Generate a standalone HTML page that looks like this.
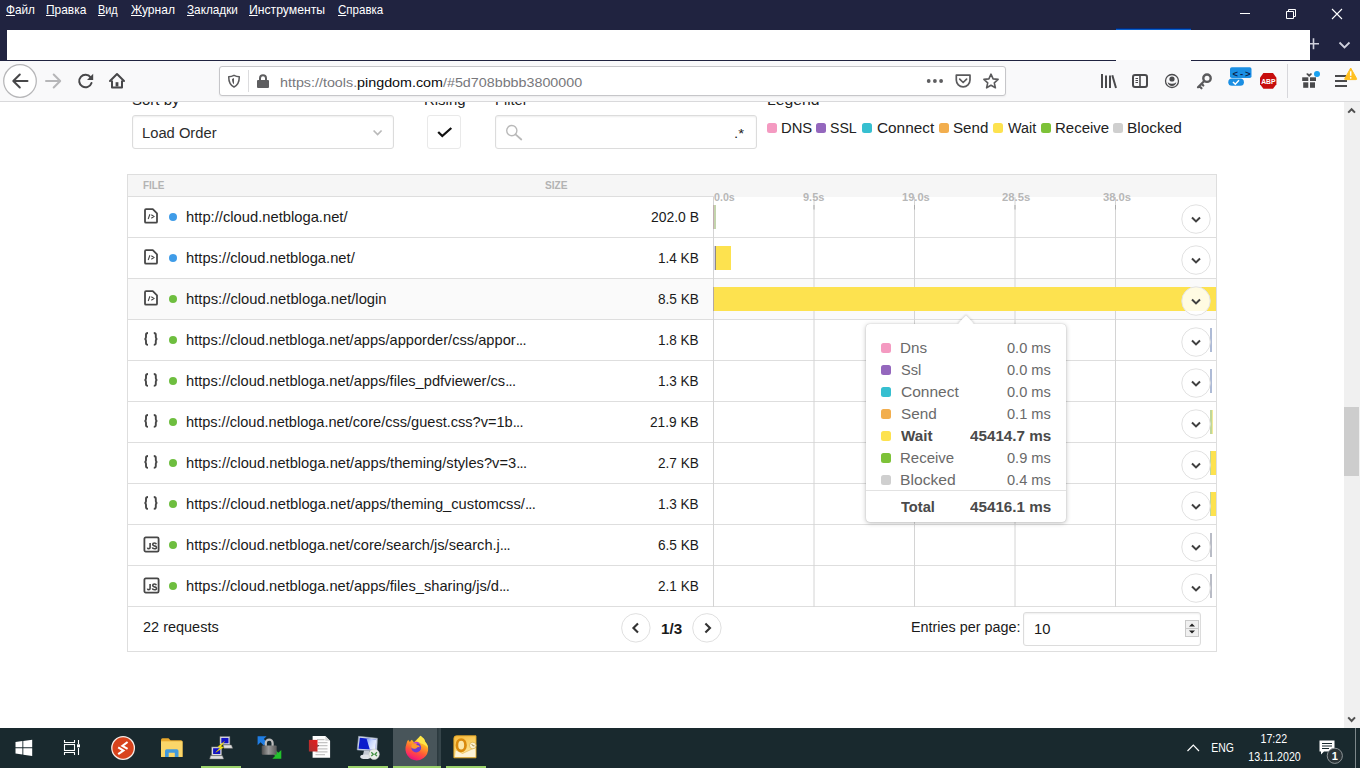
<!DOCTYPE html>
<html lang="ru">
<head>
<meta charset="utf-8">
<title>Pingdom Tools</title>
<style>
*{box-sizing:border-box;margin:0;padding:0}
html,body{width:1360px;height:768px;overflow:hidden;background:#fff}
body{position:relative;font-family:"Liberation Sans",sans-serif;color:#222;-webkit-font-smoothing:antialiased}
.abs{position:absolute}
/* ---------- browser chrome ---------- */
#titlebar{left:0;top:0;width:1360px;height:61px;background:#202340}
#tabwhite{left:7px;top:30px;width:1303px;height:30px;background:#fff}
#activetab{left:1116px;top:28px;width:75px;height:33px;background:linear-gradient(#062a78 0,#062a78 1px,#0a5fcb 1px,#0a5fcb 2px,#fff 2px,#fff 32px,#f9f9fa 32px)}
#toolbar{left:0;top:61px;width:1360px;height:41px;background:#f9f9fa;border-bottom:1px solid #d9d9db}
#urlbar{left:219px;top:66px;width:787px;height:30px;background:#fff;border:1px solid #c6c6c9;border-radius:3px;box-shadow:0 1px 2px rgba(0,0,0,.06)}
/* ---------- page ---------- */
#page{left:0;top:102px;width:1344px;height:626px;background:#fff;overflow:hidden}
#scrollbar{left:1344px;top:102px;width:16px;height:626px;background:#f0f0f0}
#thumb{left:1344px;top:407px;width:15px;height:69px;background:#cdcdcd}
.box{background:#fff;border:1px solid #dcdcdc;border-radius:3px}

/* ---------- table ---------- */
#tbl{left:127px;top:72px;width:1090px;height:478px;border:1px solid #dedede;background:#fff}
#thead{left:128px;top:73px;width:1088px;height:22px;background:#f6f6f6}
#theadb{left:128px;top:94px;width:586px;height:1px;background:#dedede}
.row{left:128px;width:1088px;height:41px;border-bottom:1px solid #dedede}
.row.hov{background:#fafafa}
.dot{left:41px;top:16px;width:8px;height:8px;border-radius:50%}
.bar{height:24px}
.exp{width:29px;height:29px;border-radius:50%;border:1px solid #dedede;background:rgba(255,255,255,.82);left:1181px}

/* ---------- tooltip ---------- */
#tip{left:866px;top:222px;width:200px;height:198px;background:#fff;border-radius:4px;box-shadow:0 1px 5px rgba(0,0,0,.26),0 0 1px rgba(0,0,0,.25)}
#tiparrow{left:960px;top:216px;width:12px;height:12px;background:#fff;transform:rotate(45deg);box-shadow:-1px -1px 2px rgba(0,0,0,.13)}
/* ---------- footer ---------- */
/* ---------- legend ---------- */
.t{position:absolute;white-space:nowrap;line-height:1;transform-origin:0 0}
.t u{text-decoration:underline;text-underline-offset:1px;text-decoration-thickness:1px}
.t b{font-weight:normal;color:#0c0c0d}
.t i{font-style:normal;letter-spacing:-.7px}
.inset{box-shadow:inset 0 1px 2px rgba(0,0,0,.07)}
.pg{width:29px;height:29px;border-radius:50%;border:1px solid #dedede;background:#fff}
.lq{top:21px;width:10px;height:10px;border-radius:2.500px}
.tq{left:881px;width:10px;height:10px;border-radius:2.500px}
/* ---------- taskbar ---------- */
#taskbar{left:0;top:728px;width:1360px;height:40px;background:#19292e}
</style>
</head>
<body>
<div id="titlebar" class="abs"></div>
<div id="tabwhite" class="abs"></div>
<div id="activetab" class="abs"></div>
<div id="toolbar" class="abs"></div>
<div id="urlbar" class="abs"></div>
<!--CHROME-->
<svg class="abs" style="left:0;top:0" width="1360" height="102" viewBox="0 0 1360 102">
<!-- window controls -->
<g stroke="#fff" stroke-width="1" fill="none">
<path d="M1240 13.500 H1250"/>
<path d="M1286.500 11.500 H1293.500 V18.500 H1286.500 Z"/>
<path d="M1288.500 11.500 V9.500 H1295.500 V16.500 H1293.500"/>
<path d="M1332 9 L1342 19 M1342 9 L1332 19" stroke-width="1.1"/>
</g>
<!-- new tab + / list tabs -->
<g stroke="#cfd0dc" stroke-width="1.6" fill="none">
<path d="M1310 43.800 H1319 M1313.500 38.300 V49.300"/>
<path d="M1339.500 42.500 L1344.500 47.500 L1349.500 42.500" stroke-width="1.8"/>
</g>
<!-- back -->
<circle cx="20" cy="81" r="16.300" fill="#fff" stroke="#b6b6b8" stroke-width="1.250"/>
<path d="M27.500 81 H13.500 M19.800 74.500 L13.300 81 L19.800 87.500" fill="none" stroke="#474749" stroke-width="2" stroke-linecap="round" stroke-linejoin="round"/>
<!-- forward -->
<path d="M46 81 H60 M53.700 74.500 L60.200 81 L53.700 87.500" fill="none" stroke="#b6b6b8" stroke-width="2" stroke-linecap="round" stroke-linejoin="round"/>
<!-- reload -->
<path d="M90.600 77.300 A6.300 6.300 0 1 0 91.500 83" fill="none" stroke="#474749" stroke-width="2" stroke-linecap="round"/>
<path d="M93.200 73.800 V80 H87 Z" fill="#474749"/>
<!-- home -->
<path d="M110 81 L117 74 L124 81" fill="none" stroke="#474749" stroke-width="2" stroke-linecap="round" stroke-linejoin="round"/>
<path d="M112 80.500 V87.500 H122 V80.500" fill="none" stroke="#474749" stroke-width="2" stroke-linejoin="round"/>
<rect x="115.600" y="82.200" width="2.800" height="4.300" fill="#474749"/>
<!-- shield -->
<path d="M234 75.300 C236 76.400 238 76.700 239.300 76.700 C239.300 82 237.500 85.300 234 87 C230.500 85.300 228.700 82 228.700 76.700 C230 76.700 232 76.400 234 75.300 Z" fill="none" stroke="#5a5a5c" stroke-width="1.500" stroke-linejoin="round"/>
<path d="M234 78 V84.300 C232.700 83.300 232 81.500 232 79 Z" fill="#5a5a5c"/>
<path d="M248.500 70 V92" stroke="#dcdcde" stroke-width="1"/>
<!-- lock -->
<path d="M260 81 V78.200 A3 3 0 0 1 266 78.200 V81" fill="none" stroke="#5e5e60" stroke-width="2"/>
<rect x="257" y="80" width="12" height="8" rx="1" fill="#5e5e60"/>
<!-- page actions -->
<g fill="#5e5e60"><circle cx="928.700" cy="81" r="1.900"/><circle cx="934.900" cy="81" r="1.900"/><circle cx="941.100" cy="81" r="1.900"/></g>
<path d="M956.300 75.200 H970 V80 A6.850 6.850 0 0 1 956.300 80 Z" fill="none" stroke="#5a5a5c" stroke-width="1.700" stroke-linejoin="round"/>
<path d="M959.700 79.200 L963.150 82.500 L966.600 79.200" fill="none" stroke="#5a5a5c" stroke-width="1.700" stroke-linecap="round" stroke-linejoin="round"/>
<path d="M991 74.200 L993.100 78.900 L998.100 79.400 L994.300 82.800 L995.400 87.800 L991 85.200 L986.600 87.800 L987.700 82.800 L983.900 79.400 L988.900 78.900 Z" fill="none" stroke="#5a5a5c" stroke-width="1.600" stroke-linejoin="round"/>
<!-- library -->
<g stroke="#4a4a4c" stroke-width="2" fill="none" stroke-linecap="butt">
<path d="M1102 74 V88 M1106 75.500 V88 M1110 75.500 V88 M1112.300 75.200 L1116 88"/>
</g>
<!-- sidebar -->
<rect x="1133" y="75" width="14" height="12" rx="2" fill="none" stroke="#4a4a4c" stroke-width="2"/>
<path d="M1140 75 V87" stroke="#4a4a4c" stroke-width="1.600"/>
<path d="M1135.500 78.500 H1138 M1135.500 80.500 H1138 M1135.500 82.500 H1138" stroke="#4a4a4c" stroke-width="1"/>
<!-- account -->
<circle cx="1172" cy="81" r="6.500" fill="none" stroke="#4a4a4c" stroke-width="1.300"/>
<circle cx="1172" cy="79" r="2.600" fill="#4a4a4c"/>
<path d="M1167.600 82.300 Q1172 85.300 1176.400 82.300 Q1175.500 86 1172 86 Q1168.500 86 1167.600 82.300 Z" fill="#4a4a4c"/>
<!-- key -->
<circle cx="1207" cy="78.200" r="3.700" fill="none" stroke="#5a5a5c" stroke-width="2.400"/>
<path d="M1204.300 81 L1198 87.300 M1199.200 86 L1201.500 88.300 M1201.600 83.800 L1203.300 85.500" fill="none" stroke="#5a5a5c" stroke-width="2.200" stroke-linecap="round"/>
<!-- extension: blue -->
<rect x="1230" y="67.300" width="21.500" height="10.700" rx="1.800" fill="#1b8fe3"/>
<rect x="1228.300" y="78.600" width="15.600" height="7.200" rx="3.600" fill="#1b8fe3"/>
<path d="M1233 82 L1235.300 84.200 L1239 80.300" fill="none" stroke="#fff" stroke-width="1.500"/>
<text x="1232.600" y="76.700" font-family="Liberation Sans, sans-serif" font-size="9.500" font-weight="bold" fill="#0c1f4a" textLength="18" lengthAdjust="spacing">&lt;-&gt;</text>
<!-- ABP -->
<path d="M1263.400 73 H1273 L1276.400 77.700 V84.200 L1273 88.800 H1263.400 L1260 84.200 V77.700 Z" fill="#c70d0d"/>
<text x="1261.200" y="83.900" font-family="Liberation Sans, sans-serif" font-size="7.800" font-weight="bold" fill="#fff" textLength="14.300" lengthAdjust="spacingAndGlyphs">ABP</text>
<path d="M1287.500 64 V98" stroke="#d7d7db" stroke-width="1"/>
<!-- gift -->
<g fill="#4a4a4c">
<rect x="1302.200" y="77.300" width="6.100" height="3.700"/><rect x="1310" y="77.300" width="6" height="3.700"/>
<rect x="1303.200" y="82.300" width="5.100" height="5.500"/><rect x="1310" y="82.300" width="5" height="5.500"/>
<path d="M1309.150 76.900 L1306.200 73.900 Q1307.600 72.600 1309.150 74.500 Q1310.700 72.600 1312.100 73.900 Z"/>
</g>
<circle cx="1317" cy="74" r="3" fill="#19a1f0"/>
<!-- menu -->
<path d="M1335 76 H1347 M1335 81 H1347 M1335 86 H1347" stroke="#4a4a4c" stroke-width="2"/>
<path d="M1350.700 68 L1356.600 78.600 Q1357 79.600 1356 79.600 H1345.400 Q1344.400 79.600 1344.800 78.600 Z" fill="#ffbf1f" stroke="#ffbf1f" stroke-width="1" stroke-linejoin="round"/>
<path d="M1350.700 71.300 V75.800" stroke="#fff" stroke-width="1.500"/><circle cx="1350.700" cy="77.800" r="0.850" fill="#fff"/>
</svg>
<!--/CHROME-->
<span class="t" style="left:6.20px;top:4.10px;font-size:12.4px;color:#fff;transform:scaleX(0.9493)"><u>Ф</u>айл</span>
<span class="t" style="left:46.44px;top:4.10px;font-size:12.4px;color:#fff;transform:scaleX(0.9618)"><u>П</u>равка</span>
<span class="t" style="left:98.42px;top:4.10px;font-size:12.4px;color:#fff;transform:scaleX(0.8789)"><u>В</u>ид</span>
<span class="t" style="left:131.30px;top:4.10px;font-size:12.4px;color:#fff;transform:scaleX(0.9715)"><u>Ж</u>урнал</span>
<span class="t" style="left:186.80px;top:4.10px;font-size:12.4px;color:#fff;transform:scaleX(0.9496)"><u>З</u>акладки</span>
<span class="t" style="left:249.42px;top:4.10px;font-size:12.4px;color:#fff;transform:scaleX(0.9849)"><u>И</u>нструменты</span>
<span class="t" style="left:338.30px;top:4.10px;font-size:12.4px;color:#fff;transform:scaleX(0.9299)"><u>С</u>правка</span>
<span class="t" style="left:279.70px;top:76.10px;font-size:13.2px;color:#77777b;transform:scaleX(1.0845)">https://tools.<b>pingdom.com</b>/#5d708bbbb3800000</span>

<div id="page" class="abs">
<!-- controls (page coords = viewport y - 102) -->
<div class="abs box inset" style="left:132px;top:13px;width:262px;height:34px"></div>
<svg class="abs" style="left:371px;top:26px" width="14" height="10" viewBox="0 0 14 10"><path d="M2.600 2.500 L6.600 6.500 L10.600 2.500" fill="none" stroke="#b9b9b9" stroke-width="1.700"/></svg>
<div class="abs box" style="left:427px;top:13px;width:34px;height:34px;border-color:#e9e9e9"></div>
<svg class="abs" style="left:435px;top:23px" width="20" height="14" viewBox="0 0 20 14"><path d="M3.200 7 L7.300 11 L16.300 3" fill="none" stroke="#111" stroke-width="2.300"/></svg>
<div class="abs box inset" style="left:495px;top:13px;width:262px;height:34px"></div>
<svg class="abs" style="left:503px;top:20px" width="22" height="22" viewBox="0 0 22 22"><circle cx="8.800" cy="8.600" r="5.100" fill="none" stroke="#b9b9b9" stroke-width="1.400"/><path d="M12.500 12.300 L18.300 17.500" stroke="#b9b9b9" stroke-width="1.800" stroke-linecap="round"/></svg>
<!-- legend squares -->
<div class="abs lq" style="left:767px;background:#f49ac1"></div>
<div class="abs lq" style="left:816px;background:#9467bd"></div>
<div class="abs lq" style="left:862px;background:#36bfd0"></div>
<div class="abs lq" style="left:939px;background:#f2ae4e"></div>
<div class="abs lq" style="left:993px;background:#fde24f"></div>
<div class="abs lq" style="left:1041px;background:#7dc238"></div>
<div class="abs lq" style="left:1113px;background:#cfcfcf"></div>
<!-- table frame -->
<div id="tbl" class="abs"></div>
<div id="thead" class="abs"></div>
<div id="theadb" class="abs"></div>
<!-- footer -->
<svg class="abs" style="left:620px;top:510px" width="104" height="32" viewBox="0 0 104 32"><circle cx="15.850" cy="15.850" r="14.250" fill="#fff" stroke="#e0e0e0" stroke-width="1"/><circle cx="86.900" cy="15.850" r="14.250" fill="#fff" stroke="#e0e0e0" stroke-width="1"/><path d="M18 11.400 L13.400 16 L18 20.600 M85.400 11.400 L90 16 L85.400 20.600" fill="none" stroke="#333" stroke-width="2.100"/></svg>
<div class="abs box inset" style="left:1023px;top:510px;width:178px;height:34px"></div>
<div class="abs" style="left:1185px;top:518px;width:14px;height:17px;background:#f0f0f0;border:1px solid #c9c9c9"></div>
<div class="abs" style="left:1185px;top:526px;width:14px;height:1px;background:#c9c9c9"></div>
<svg class="abs" style="left:1188px;top:520px" width="8" height="13" viewBox="0 0 8 13"><path d="M1 4.500 L4 1.500 L7 4.500 Z M1 8.500 L4 11.500 L7 8.500 Z" fill="#222"/></svg>

<div class="abs row" style="top:95px"><svg class="abs" style="left:15px;top:10px" width="17" height="18" viewBox="0 0 17 18"><path d="M3 2.200 H9.800 L14 6.400 V14.700 Q14 15.700 13 15.700 H3 Q2 15.700 2 14.700 V3.200 Q2 2.200 3 2.200 Z" fill="#fff" stroke="#474747" stroke-width="1.800" stroke-linejoin="round"/><path d="M5.200 12 L6.900 7.200 M8.300 7.700 L11 9.500 L8.300 11.300" fill="none" stroke="#474747" stroke-width="1.100"/></svg><span class="abs dot" style="background:#3f9ce8"></span></div>
<div class="abs row" style="top:136px"><svg class="abs" style="left:15px;top:10px" width="17" height="18" viewBox="0 0 17 18"><path d="M3 2.200 H9.800 L14 6.400 V14.700 Q14 15.700 13 15.700 H3 Q2 15.700 2 14.700 V3.200 Q2 2.200 3 2.200 Z" fill="#fff" stroke="#474747" stroke-width="1.800" stroke-linejoin="round"/><path d="M5.200 12 L6.900 7.200 M8.300 7.700 L11 9.500 L8.300 11.300" fill="none" stroke="#474747" stroke-width="1.100"/></svg><span class="abs dot" style="background:#3f9ce8"></span></div>
<div class="abs row hov" style="top:177px"><svg class="abs" style="left:15px;top:10px" width="17" height="18" viewBox="0 0 17 18"><path d="M3 2.200 H9.800 L14 6.400 V14.700 Q14 15.700 13 15.700 H3 Q2 15.700 2 14.700 V3.200 Q2 2.200 3 2.200 Z" fill="#fff" stroke="#474747" stroke-width="1.800" stroke-linejoin="round"/><path d="M5.200 12 L6.900 7.200 M8.300 7.700 L11 9.500 L8.300 11.300" fill="none" stroke="#474747" stroke-width="1.100"/></svg><span class="abs dot" style="background:#6ebe3f"></span></div>
<div class="abs row" style="top:218px"><svg class="abs" style="left:14px;top:10px" width="20" height="19" viewBox="0 0 20 19"><path d="M6 3 Q4 3 4 4.800 V7.200 Q4 8.700 2.600 8.950 Q4 9.200 4 10.700 V13.100 Q4 14.900 6 14.900 M11.800 3 Q13.800 3 13.800 4.800 V7.200 Q13.800 8.700 15.200 8.950 Q13.800 9.200 13.800 10.700 V13.100 Q13.800 14.900 11.800 14.900" fill="none" stroke="#474747" stroke-width="1.900"/></svg><span class="abs dot" style="background:#6ebe3f"></span></div>
<div class="abs row" style="top:259px"><svg class="abs" style="left:14px;top:10px" width="20" height="19" viewBox="0 0 20 19"><path d="M6 3 Q4 3 4 4.800 V7.200 Q4 8.700 2.600 8.950 Q4 9.200 4 10.700 V13.100 Q4 14.900 6 14.900 M11.800 3 Q13.800 3 13.800 4.800 V7.200 Q13.800 8.700 15.200 8.950 Q13.800 9.200 13.800 10.700 V13.100 Q13.800 14.900 11.800 14.900" fill="none" stroke="#474747" stroke-width="1.900"/></svg><span class="abs dot" style="background:#6ebe3f"></span></div>
<div class="abs row" style="top:300px"><svg class="abs" style="left:14px;top:10px" width="20" height="19" viewBox="0 0 20 19"><path d="M6 3 Q4 3 4 4.800 V7.200 Q4 8.700 2.600 8.950 Q4 9.200 4 10.700 V13.100 Q4 14.900 6 14.900 M11.800 3 Q13.800 3 13.800 4.800 V7.200 Q13.800 8.700 15.200 8.950 Q13.800 9.200 13.800 10.700 V13.100 Q13.800 14.900 11.800 14.900" fill="none" stroke="#474747" stroke-width="1.900"/></svg><span class="abs dot" style="background:#6ebe3f"></span></div>
<div class="abs row" style="top:341px"><svg class="abs" style="left:14px;top:10px" width="20" height="19" viewBox="0 0 20 19"><path d="M6 3 Q4 3 4 4.800 V7.200 Q4 8.700 2.600 8.950 Q4 9.200 4 10.700 V13.100 Q4 14.900 6 14.900 M11.800 3 Q13.800 3 13.800 4.800 V7.200 Q13.800 8.700 15.200 8.950 Q13.800 9.200 13.800 10.700 V13.100 Q13.800 14.900 11.800 14.900" fill="none" stroke="#474747" stroke-width="1.900"/></svg><span class="abs dot" style="background:#6ebe3f"></span></div>
<div class="abs row" style="top:382px"><svg class="abs" style="left:14px;top:10px" width="20" height="19" viewBox="0 0 20 19"><path d="M6 3 Q4 3 4 4.800 V7.200 Q4 8.700 2.600 8.950 Q4 9.200 4 10.700 V13.100 Q4 14.900 6 14.900 M11.800 3 Q13.800 3 13.800 4.800 V7.200 Q13.800 8.700 15.200 8.950 Q13.800 9.200 13.800 10.700 V13.100 Q13.800 14.900 11.800 14.900" fill="none" stroke="#474747" stroke-width="1.900"/></svg><span class="abs dot" style="background:#6ebe3f"></span></div>
<div class="abs row" style="top:423px"><svg class="abs" style="left:14.600px;top:10.900px" width="17" height="17" viewBox="0 0 17 17"><rect x="1.400" y="1.400" width="14.200" height="14.200" rx="1.300" fill="#fff" stroke="#474747" stroke-width="1.800"/><path d="M7.100 7 V11.300 Q7.100 12.800 5.800 12.800 Q4.700 12.800 4.500 11.600 M13.300 8.300 Q13 7 11.400 7 Q9.700 7 9.700 8.500 Q9.700 9.500 11.400 9.900 Q13.500 10.300 13.500 11.500 Q13.500 12.800 11.500 12.800 Q9.600 12.800 9.300 11.400" fill="none" stroke="#474747" stroke-width="1.600"/></svg><span class="abs dot" style="background:#6ebe3f"></span></div>
<div class="abs row" style="top:464px"><svg class="abs" style="left:14.600px;top:10.900px" width="17" height="17" viewBox="0 0 17 17"><rect x="1.400" y="1.400" width="14.200" height="14.200" rx="1.300" fill="#fff" stroke="#474747" stroke-width="1.800"/><path d="M7.100 7 V11.300 Q7.100 12.800 5.800 12.800 Q4.700 12.800 4.500 11.600 M13.300 8.300 Q13 7 11.400 7 Q9.700 7 9.700 8.500 Q9.700 9.500 11.400 9.900 Q13.500 10.300 13.500 11.500 Q13.500 12.800 11.500 12.800 Q9.600 12.800 9.300 11.400" fill="none" stroke="#474747" stroke-width="1.600"/></svg><span class="abs dot" style="background:#6ebe3f"></span></div>
<svg class="abs" style="left:0;top:95px" width="1344" height="410" viewBox="0 0 1344 410"><g stroke="#d4d4d4" stroke-width="1"><path d="M713.5 0 V410"/><path d="M814 0 V410"/><path d="M914.5 0 V410"/><path d="M1015 0 V410"/><path d="M1115.5 0 V410"/></g><g stroke="#adadad" stroke-width="1"><path d="M814 8 V12.500"/><path d="M914.5 8 V12.500"/><path d="M1015 8 V12.500"/><path d="M1115.5 8 V12.500"/></g></svg>
<div class="abs bar" style="left:713px;top:103px;width:1px;background:#c2adb2"></div>
<div class="abs bar" style="left:714px;top:103px;width:2px;background:#c4d4ad"></div>
<div class="abs bar" style="left:714px;top:144px;width:1px;background:#d3d1ea"></div>
<div class="abs bar" style="left:715px;top:144px;width:1px;background:#8f8a80"></div>
<div class="abs bar" style="left:716px;top:144px;width:15px;background:#fde24f"></div>
<div class="abs bar" style="left:713px;top:185px;width:502.5px;background:#fde24f"></div>
<div class="abs bar" style="left:713px;top:185px;width:1px;background:#b5a8a0"></div>
<div class="abs bar" style="left:1210px;top:226px;width:2px;background:#aebbd6"></div>
<div class="abs bar" style="left:1210px;top:267px;width:2px;background:#aebbd6"></div>
<div class="abs bar" style="left:1210px;top:308px;width:2px;background:#bfd79a"></div>
<div class="abs bar" style="left:1212px;top:308px;width:1px;background:#f3ea9a"></div>
<div class="abs bar" style="left:1210px;top:349px;width:1px;background:#bfd79a"></div>
<div class="abs bar" style="left:1211px;top:349px;width:4.5px;background:#fde24f"></div>
<div class="abs bar" style="left:1210px;top:390px;width:1px;background:#bfd79a"></div>
<div class="abs bar" style="left:1211px;top:390px;width:4.5px;background:#fde24f"></div>
<div class="abs bar" style="left:1210px;top:431px;width:2px;background:#b9bcc6"></div>
<div class="abs bar" style="left:1210px;top:472px;width:2px;background:#b9bcc6"></div>
<svg class="abs" style="left:1180px;top:101px" width="32" height="32" viewBox="0 0 32 32"><circle cx="16" cy="16.050" r="14.250" fill="rgba(255,255,255,.84)" stroke="#e2e2e2" stroke-width="1"/><path d="M12 14.500 L16 18.400 L20 14.500" fill="none" stroke="#404040" stroke-width="2"/></svg>
<svg class="abs" style="left:1180px;top:142px" width="32" height="32" viewBox="0 0 32 32"><circle cx="16" cy="16.050" r="14.250" fill="rgba(255,255,255,.84)" stroke="#e2e2e2" stroke-width="1"/><path d="M12 14.500 L16 18.400 L20 14.500" fill="none" stroke="#404040" stroke-width="2"/></svg>
<svg class="abs" style="left:1180px;top:183px" width="32" height="32" viewBox="0 0 32 32"><circle cx="16" cy="16.050" r="14.250" fill="rgba(255,255,255,.84)" stroke="#e2e2e2" stroke-width="1"/><path d="M12 14.500 L16 18.400 L20 14.500" fill="none" stroke="#404040" stroke-width="2"/></svg>
<svg class="abs" style="left:1180px;top:224px" width="32" height="32" viewBox="0 0 32 32"><circle cx="16" cy="16.050" r="14.250" fill="rgba(255,255,255,.84)" stroke="#e2e2e2" stroke-width="1"/><path d="M12 14.500 L16 18.400 L20 14.500" fill="none" stroke="#404040" stroke-width="2"/></svg>
<svg class="abs" style="left:1180px;top:265px" width="32" height="32" viewBox="0 0 32 32"><circle cx="16" cy="16.050" r="14.250" fill="rgba(255,255,255,.84)" stroke="#e2e2e2" stroke-width="1"/><path d="M12 14.500 L16 18.400 L20 14.500" fill="none" stroke="#404040" stroke-width="2"/></svg>
<svg class="abs" style="left:1180px;top:306px" width="32" height="32" viewBox="0 0 32 32"><circle cx="16" cy="16.050" r="14.250" fill="rgba(255,255,255,.84)" stroke="#e2e2e2" stroke-width="1"/><path d="M12 14.500 L16 18.400 L20 14.500" fill="none" stroke="#404040" stroke-width="2"/></svg>
<svg class="abs" style="left:1180px;top:347px" width="32" height="32" viewBox="0 0 32 32"><circle cx="16" cy="16.050" r="14.250" fill="rgba(255,255,255,.84)" stroke="#e2e2e2" stroke-width="1"/><path d="M12 14.500 L16 18.400 L20 14.500" fill="none" stroke="#404040" stroke-width="2"/></svg>
<svg class="abs" style="left:1180px;top:388px" width="32" height="32" viewBox="0 0 32 32"><circle cx="16" cy="16.050" r="14.250" fill="rgba(255,255,255,.84)" stroke="#e2e2e2" stroke-width="1"/><path d="M12 14.500 L16 18.400 L20 14.500" fill="none" stroke="#404040" stroke-width="2"/></svg>
<svg class="abs" style="left:1180px;top:429px" width="32" height="32" viewBox="0 0 32 32"><circle cx="16" cy="16.050" r="14.250" fill="rgba(255,255,255,.84)" stroke="#e2e2e2" stroke-width="1"/><path d="M12 14.500 L16 18.400 L20 14.500" fill="none" stroke="#404040" stroke-width="2"/></svg>
<svg class="abs" style="left:1180px;top:470px" width="32" height="32" viewBox="0 0 32 32"><circle cx="16" cy="16.050" r="14.250" fill="rgba(255,255,255,.84)" stroke="#e2e2e2" stroke-width="1"/><path d="M12 14.500 L16 18.400 L20 14.500" fill="none" stroke="#404040" stroke-width="2"/></svg>
<span class="t" style="left:131.60px;top:-9.90px;font-size:15.4px;color:#222;transform:scaleX(0.9743)">Sort by</span>
<span class="t" style="left:424.03px;top:-9.90px;font-size:15.4px;color:#222;transform:scaleX(0.9707)">Rising</span>
<span class="t" style="left:495.05px;top:-9.90px;font-size:15.4px;color:#222;transform:scaleX(0.9524)">Filter</span>
<span class="t" style="left:766.98px;top:-9.90px;font-size:15.4px;color:#222;transform:scaleX(1.0241)">Legend</span>
<span class="t" style="left:142.44px;top:23.10px;font-size:15.4px;color:#2c2c2c;transform:scaleX(0.9579)">Load Order</span>
<span class="t" style="left:734.44px;top:25.10px;font-size:13px;color:#222;transform:scaleX(1.1561)">.*</span>
<span class="t" style="left:780.84px;top:18.10px;font-size:15.4px;color:#222;transform:scaleX(0.9606)">DNS</span>
<span class="t" style="left:830.40px;top:18.10px;font-size:15.4px;color:#222;transform:scaleX(0.9177)">SSL</span>
<span class="t" style="left:876.80px;top:18.10px;font-size:15.4px;color:#222;transform:scaleX(0.9974)">Connect</span>
<span class="t" style="left:953.30px;top:18.10px;font-size:15.4px;color:#222;transform:scaleX(0.9835)">Send</span>
<span class="t" style="left:1007.50px;top:18.10px;font-size:15.4px;color:#222;transform:scaleX(0.9310)">Wait</span>
<span class="t" style="left:1054.73px;top:18.10px;font-size:15.4px;color:#222;transform:scaleX(0.9733)">Receive</span>
<span class="t" style="left:1126.70px;top:18.10px;font-size:15.4px;color:#222;transform:scaleX(1.0039)">Blocked</span>
<span class="t" style="left:143.20px;top:78.10px;font-size:11.2px;color:#b3b3b3;transform:scaleX(0.8839);font-weight:bold">FILE</span>
<span class="t" style="left:544.90px;top:78.10px;font-size:11.2px;color:#b3b3b3;transform:scaleX(0.9093);font-weight:bold">SIZE</span>
<span class="t" style="left:713.50px;top:90.10px;font-size:11px;color:#b7b7b7;transform:scaleX(0.9675);font-weight:bold">0.0s</span>
<span class="t" style="left:803.40px;top:90.10px;font-size:11px;color:#b7b7b7;transform:scaleX(1.0004);font-weight:bold">9.5s</span>
<span class="t" style="left:901.50px;top:90.10px;font-size:11px;color:#b7b7b7;transform:scaleX(1.0070);font-weight:bold">19.0s</span>
<span class="t" style="left:1002.00px;top:90.10px;font-size:11px;color:#b7b7b7;transform:scaleX(1.0252);font-weight:bold">28.5s</span>
<span class="t" style="left:1102.60px;top:90.10px;font-size:11px;color:#b7b7b7;transform:scaleX(1.0216);font-weight:bold">38.0s</span>
<span class="t" style="left:185.88px;top:108.10px;font-size:14.5px;color:#1a1a1a;transform:scaleX(1.0171)">http://cloud.netbloga.net/</span>
<span class="t" style="left:650.55px;top:108.10px;font-size:14px;color:#1a1a1a;transform:scaleX(0.9943)">202.0 B</span>
<span class="t" style="left:185.88px;top:149.10px;font-size:14.5px;color:#1a1a1a;transform:scaleX(1.0161)">https://cloud.netbloga.net/</span>
<span class="t" style="left:657.83px;top:149.10px;font-size:14px;color:#1a1a1a;transform:scaleX(0.9683)">1.4 KB</span>
<span class="t" style="left:185.88px;top:190.10px;font-size:14.5px;color:#1a1a1a;transform:scaleX(1.0198)">https://cloud.netbloga.net/login</span>
<span class="t" style="left:657.60px;top:190.10px;font-size:14px;color:#1a1a1a;transform:scaleX(0.9739)">8.5 KB</span>
<span class="t" style="left:185.89px;top:231.10px;font-size:14.5px;color:#1a1a1a;transform:scaleX(1.0098)">https://cloud.netbloga.net/apps/apporder/css/appor<i>...</i></span>
<span class="t" style="left:657.93px;top:231.10px;font-size:14px;color:#1a1a1a;transform:scaleX(0.9659)">1.8 KB</span>
<span class="t" style="left:185.89px;top:272.10px;font-size:14.5px;color:#1a1a1a;transform:scaleX(1.0101)">https://cloud.netbloga.net/apps/files_pdfviewer/cs<i>...</i></span>
<span class="t" style="left:657.93px;top:272.10px;font-size:14px;color:#1a1a1a;transform:scaleX(0.9659)">1.3 KB</span>
<span class="t" style="left:185.90px;top:313.10px;font-size:14.5px;color:#1a1a1a;transform:scaleX(1.0045)">https://cloud.netbloga.net/core/css/guest.css?v=1b<i>...</i></span>
<span class="t" style="left:649.80px;top:313.10px;font-size:14px;color:#1a1a1a;transform:scaleX(0.9783)">21.9 KB</span>
<span class="t" style="left:185.89px;top:354.10px;font-size:14.5px;color:#1a1a1a;transform:scaleX(1.0125)">https://cloud.netbloga.net/apps/theming/styles?v=3<i>...</i></span>
<span class="t" style="left:657.70px;top:354.10px;font-size:14px;color:#1a1a1a;transform:scaleX(0.9715)">2.7 KB</span>
<span class="t" style="left:185.88px;top:395.10px;font-size:14.5px;color:#1a1a1a;transform:scaleX(1.0156)">https://cloud.netbloga.net/apps/theming_customcss/<i>...</i></span>
<span class="t" style="left:657.93px;top:395.10px;font-size:14px;color:#1a1a1a;transform:scaleX(0.9659)">1.3 KB</span>
<span class="t" style="left:185.89px;top:436.10px;font-size:14.5px;color:#1a1a1a;transform:scaleX(1.0088)">https://cloud.netbloga.net/core/search/js/search.j<i>...</i></span>
<span class="t" style="left:657.60px;top:436.10px;font-size:14px;color:#1a1a1a;transform:scaleX(0.9739)">6.5 KB</span>
<span class="t" style="left:185.89px;top:477.10px;font-size:14.5px;color:#1a1a1a;transform:scaleX(1.0110)">https://cloud.netbloga.net/apps/files_sharing/js/d<i>...</i></span>
<span class="t" style="left:657.80px;top:477.10px;font-size:14px;color:#1a1a1a;transform:scaleX(0.9691)">2.1 KB</span>
<span class="t" style="left:142.80px;top:517.10px;font-size:15px;color:#1a1a1a;transform:scaleX(0.9655)">22 requests</span>
<span class="t" style="left:661.40px;top:520.10px;font-size:14.2px;color:#1a1a1a;transform:scaleX(1.0690);font-weight:bold">1/3</span>
<span class="t" style="left:911.17px;top:517.10px;font-size:15.4px;color:#1a1a1a;transform:scaleX(0.9336)">Entries per page:</span>
<span class="t" style="left:1033.69px;top:520.10px;font-size:14.6px;color:#1a1a1a;transform:scaleX(1.0121)">10</span>
<div id="tiparrow" class="abs"></div>
<div id="tip" class="abs"></div>
<div class="abs" style="left:960px;top:217px;width:12px;height:12px;background:#fff;transform:rotate(45deg)"></div>
<div class="abs tq" style="top:241px;background:#f49ac1"></div>
<div class="abs tq" style="top:263px;background:#9467bd"></div>
<div class="abs tq" style="top:285px;background:#36bfd0"></div>
<div class="abs tq" style="top:307px;background:#f2ae4e"></div>
<div class="abs tq" style="top:329px;background:#fde24f"></div>
<div class="abs tq" style="top:351px;background:#7dc238"></div>
<div class="abs tq" style="top:373px;background:#cfcfcf"></div>
<div class="abs" style="left:866px;top:388px;width:200px;height:1px;background:#e2e2e2"></div>
<span class="t" style="left:900.41px;top:238.10px;font-size:15.4px;color:#6a6a6a;transform:scaleX(0.9860)">Dns</span>
<span class="t" style="left:1006.90px;top:238.10px;font-size:15.4px;color:#6a6a6a;transform:scaleX(0.9486)">0.0 ms</span>
<span class="t" style="left:901.40px;top:260.10px;font-size:15.4px;color:#6a6a6a;transform:scaleX(0.9494)">Ssl</span>
<span class="t" style="left:1006.90px;top:260.10px;font-size:15.4px;color:#6a6a6a;transform:scaleX(0.9486)">0.0 ms</span>
<span class="t" style="left:901.40px;top:282.10px;font-size:15.4px;color:#6a6a6a;transform:scaleX(1.0078)">Connect</span>
<span class="t" style="left:1006.90px;top:282.10px;font-size:15.4px;color:#6a6a6a;transform:scaleX(0.9486)">0.0 ms</span>
<span class="t" style="left:901.40px;top:304.10px;font-size:15.4px;color:#6a6a6a;transform:scaleX(0.9948)">Send</span>
<span class="t" style="left:1006.90px;top:304.10px;font-size:15.4px;color:#6a6a6a;transform:scaleX(0.9486)">0.1 ms</span>
<span class="t" style="left:901.40px;top:326.10px;font-size:15.4px;color:#4a4a4a;transform:scaleX(0.9877);font-weight:bold">Wait</span>
<span class="t" style="left:970.30px;top:326.10px;font-size:15.4px;color:#4a4a4a;transform:scaleX(0.9890);font-weight:bold">45414.7 ms</span>
<span class="t" style="left:900.43px;top:348.10px;font-size:15.4px;color:#6a6a6a;transform:scaleX(0.9733)">Receive</span>
<span class="t" style="left:1006.90px;top:348.10px;font-size:15.4px;color:#6a6a6a;transform:scaleX(0.9486)">0.9 ms</span>
<span class="t" style="left:900.38px;top:370.10px;font-size:15.4px;color:#6a6a6a;transform:scaleX(1.0189)">Blocked</span>
<span class="t" style="left:1006.90px;top:370.10px;font-size:15.4px;color:#6a6a6a;transform:scaleX(0.9486)">0.4 ms</span>
<span class="t" style="left:901.40px;top:397.10px;font-size:15.4px;color:#4a4a4a;transform:scaleX(0.9507);font-weight:bold">Total</span>
<span class="t" style="left:970.30px;top:397.10px;font-size:15.4px;color:#4a4a4a;transform:scaleX(0.9890);font-weight:bold">45416.1 ms</span>
</div>
<div id="scrollbar" class="abs"></div>
<div id="thumb" class="abs"></div>
<svg class="abs" style="left:1344px;top:102px" width="16" height="626" viewBox="0 0 16 626"><path d="M4.200 10.600 L7.600 7.200 L11 10.600 M4.200 615.400 L7.600 619 L11 615.400" fill="none" stroke="#505050" stroke-width="2"/></svg>

<div id="taskbar" class="abs"></div>
<!--TASKBAR-->
<svg class="abs" style="left:0;top:728px" width="1360" height="40" viewBox="0 728 1360 40">
<defs>
<linearGradient id="gmon" x1="0" y1="0" x2="1" y2="1"><stop offset="0" stop-color="#0a2ad8"/><stop offset="1" stop-color="#9fc0ff"/></linearGradient>
<radialGradient id="gff" cx="0.5" cy="0.35" r="0.75"><stop offset="0" stop-color="#ffde3a"/><stop offset="0.45" stop-color="#ff9a1f"/><stop offset="0.8" stop-color="#ff3b47"/><stop offset="1" stop-color="#e31587"/></radialGradient>
<linearGradient id="gol" x1="0" y1="0" x2="0.3" y2="1"><stop offset="0" stop-color="#f7b83a"/><stop offset="0.55" stop-color="#fbd56e"/><stop offset="1" stop-color="#fde9a6"/></linearGradient>
<linearGradient id="glock" x1="0" y1="0" x2="1" y2="0"><stop offset="0" stop-color="#4c4c4c"/><stop offset="0.45" stop-color="#9c9c9c"/><stop offset="1" stop-color="#5a5a5a"/></linearGradient>
<linearGradient id="gff2" x1="0.75" y1="0.05" x2="0.35" y2="1"><stop offset="0" stop-color="#fff04a"/><stop offset="0.3" stop-color="#ffae22"/><stop offset="0.62" stop-color="#ff5a36"/><stop offset="0.85" stop-color="#fb2b62"/><stop offset="1" stop-color="#e3127e"/></linearGradient>
<linearGradient id="gred" x1="1" y1="0" x2="0" y2="1"><stop offset="0" stop-color="#e81c1c"/><stop offset="1" stop-color="#a83232"/></linearGradient>
<linearGradient id="gsheen" x1="0" y1="0" x2="1" y2="0.600"><stop offset="0" stop-color="#7f9bf0"/><stop offset="0.5" stop-color="#c9d8ff"/><stop offset="1" stop-color="#eef3ff"/></linearGradient>
</defs>
<!-- active app highlight -->
<rect x="393" y="728" width="44" height="40" fill="#48555a"/>
<rect x="437" y="728" width="1.200" height="40" fill="#2c3a3f"/><rect x="438.200" y="728" width="2.800" height="40" fill="#36454a"/>
<!-- running indicators -->
<g fill="#9bd26b"><rect x="201" y="766" width="40" height="2"/><rect x="348" y="766" width="40" height="2"/><rect x="393" y="766" width="48" height="2"/><rect x="446" y="766" width="40" height="2"/></g>
<!-- start -->
<path d="M15.500 742 L22.400 741 V747.300 H15.500 Z M23.300 740.900 L32.200 739.700 V747.300 H23.300 Z M15.500 748.200 H22.400 V754.600 L15.500 753.600 Z M23.300 748.200 H32.200 V756 L23.300 754.700 Z" fill="#fff"/>
<!-- task view -->
<g fill="none" stroke="#fff" stroke-width="1.100">
<rect x="64.500" y="744.500" width="10" height="6"/>
<path d="M64.500 740 V742.500 H74.500 V740 M64.500 755 V752.500 H74.500 V755 M78.500 740 V744 M78.500 748 V755"/>
</g>
<rect x="77" y="744.300" width="3" height="3" fill="#fff"/>
<!-- remote desktop (red) -->
<circle cx="123.100" cy="748" r="11.300" fill="#d8431c" stroke="#f6ebe6" stroke-width="1.300"/>
<path d="M127.600 742 L122.400 745.900 L127.600 748.800 M118.200 747.400 L123.400 750.500 L118.200 754.200" fill="none" stroke="#fff" stroke-width="2.100"/>
<!-- explorer -->
<path d="M161 740 Q161 738.300 162.500 738.300 H168.500 L170.500 740.300 H181 Q182.500 740.300 182.500 741.800 V757 H161 Z" fill="#e9a92d"/>
<rect x="161" y="741.300" width="21.500" height="15.600" fill="#fbd669"/>
<path d="M165 757 V751 Q165 749.300 166.700 749.300 H176.800 Q178.500 749.300 178.500 751 V757 H174.800 V752.800 H168.700 V757 Z" fill="#4299dd"/>
<!-- putty -->
<g>
<rect x="220" y="736.700" width="9.800" height="7.800" fill="#e4e4e4" stroke="#8a8a8a" stroke-width="0.600"/><rect x="221.300" y="737.900" width="7.200" height="5.400" fill="#1212c4"/>
<path d="M223.200 745 H231.400 L232.600 748.300 H224 Z" fill="#e0e0e0" stroke="#777" stroke-width="0.500"/>
<rect x="211.800" y="747" width="9.800" height="8.200" fill="#e4e4e4" stroke="#8a8a8a" stroke-width="0.600"/><rect x="213.100" y="748.200" width="7.200" height="5.800" fill="#1212c4"/>
<path d="M210.600 755.700 H222.400 L223.600 759 H209.700 Z" fill="#e0e0e0" stroke="#777" stroke-width="0.500"/>
<path d="M224.500 741.500 L217.800 746.800 L220.600 747.300 L215.800 752.300 L223.800 747.200 L220.900 746.600 Z" fill="#ffee22" stroke="#c9b000" stroke-width="0.500"/>
</g>
<!-- winscp -->
<g>
<path d="M257.600 736.300 H266.600 L263.800 739.100 L267 742.300 L263.800 745.500 L260.600 742.300 L257.600 745.200 Z" fill="#1f7de3"/>
<path d="M281.300 758.800 H272.300 L275.100 756 L271.900 752.800 L275.100 749.600 L278.300 752.800 L281.300 749.900 Z" fill="#22c32b"/>
<path d="M265.800 746.500 V743 A3.400 3.400 0 0 1 272.600 743 V746.500" fill="none" stroke="#bdbdbd" stroke-width="2.200"/>
<rect x="261.700" y="745.400" width="15" height="9.400" rx="1" fill="url(#glock)"/>
</g>
<!-- document -->
<g>
<path d="M312.600 736 H325.300 L330.100 740.800 V757.800 H312.600 Z" fill="#fdfdfd"/>
<path d="M325.300 736 V740.800 H330.100 Z" fill="#d5d5d5"/>
<path d="M317 739.700 H324.500 M318 742.600 H327.500 M318 745.700 H327.500 M318 748.800 H327.500 M315.500 751.800 H327.500 M315.500 754.600 H325" stroke="#c4c4c4" stroke-width="1.300"/>
<rect x="308.900" y="739.900" width="8.600" height="11.600" fill="url(#gred)"/>
<path d="M317.500 744.600 L319 745.800 L317.500 747 Z" fill="#3a0608"/>
</g>
<!-- rdp monitor -->
<g>
<path d="M358.600 736.300 L377.400 738.300 L376.800 751 L357.200 749.900 Z" fill="#d3dbea" stroke="#9aa6bb" stroke-width="0.600"/>
<path d="M359.800 737.700 L376.100 739.400 L375.600 749.700 L358.500 748.700 Z" fill="#0b1ccc"/>
<path d="M366.500 738.400 L376.100 739.400 L375.600 749.700 L369.800 749.400 Z" fill="url(#gsheen)"/>
<path d="M364 750.500 L369.500 750.800 L369.800 755 L363 755 Z" fill="#c3c9d3"/>
<ellipse cx="365.500" cy="756.800" rx="5.300" ry="2.300" fill="#dfe3e8"/>
<circle cx="374.100" cy="754.200" r="5.200" fill="#e9ede9" stroke="#c9d0c9" stroke-width="0.600"/>
<path d="M371.300 752.300 L373.300 754.200 L371.300 756.100 M377 752.300 L375 754.200 L377 756.100" fill="none" stroke="#3f8f3f" stroke-width="1.300"/>
</g>
<!-- firefox -->
<g>
<path d="M420.500 735.800 Q424.500 738.500 425.300 742 Q428.600 745.500 428.100 750.500 Q427 757.500 420 760 Q412 761.800 407.500 755.500 Q404 750 406.500 743.500 Q407 741 408.300 739.800 Q408.800 741.300 410 742 Q410.600 740.300 412 739.800 Q412.600 741.200 414 742.200 Q417 739.500 420.500 735.800 Z" fill="url(#gff2)"/>
<path d="M420.500 735.800 Q424.500 738.500 425.300 742 Q427.800 744.700 428 748 Q425 744 421 743.500 Q417.500 742.500 416.500 740.300 Q418.800 738.300 420.500 735.800 Z" fill="#ffe648"/>
<circle cx="416.200" cy="747.600" r="4.900" fill="#6a3ad6"/>
<path d="M412 744 Q414.500 741.800 418.300 742.800 Q416.200 743.600 416.400 745 Q419.400 745 420 747.200 Q417.800 746.600 416.300 748.200 Q413.800 749.600 411.200 747.600 Q410.800 745.600 412 744 Z" fill="#ff9a2a"/>
<path d="M413 743 Q415 741.600 417.500 742 Q419.500 742.500 420.700 744 Q418 742.800 416 743.600 Z" fill="#b833e1"/>
</g>
<!-- outlook -->
<g>
<path d="M456.500 735.800 H476 V757.800 H453.900 V738.400 Q453.900 735.800 456.500 735.800 Z" fill="url(#gol)" stroke="#e3a624" stroke-width="0.900"/>
<path d="M455 757 L456 750 L462.500 753.500 L475.300 747.500 V757 Z" fill="#fdf3d6"/>
<path d="M456 750 L462.500 753.500 L475.300 747.500" fill="none" stroke="#e0b04a" stroke-width="0.600"/>
<ellipse cx="461.200" cy="745.200" rx="4.300" ry="5.700" fill="#fbe7a8" stroke="#d98a0c" stroke-width="2.700"/>
<circle cx="472.800" cy="745.500" r="3.300" fill="#fdf2d3" stroke="#d9a93a" stroke-width="0.700"/>
<path d="M471.700 744 L472.900 745.800 H474.500" fill="none" stroke="#8a6a17" stroke-width="0.700"/>
</g>
<!-- tray -->
<path d="M1187.500 751 L1193.300 745 L1199 751" fill="none" stroke="#fff" stroke-width="1.200"/>
<text x="1211.300" y="752.300" font-family="Liberation Sans, sans-serif" font-size="12.300" fill="#fff" textLength="22.600" lengthAdjust="spacingAndGlyphs">ENG</text>
<text x="1273.800" y="743.200" font-family="Liberation Sans, sans-serif" font-size="12" fill="#fff" text-anchor="middle" textLength="26.500" lengthAdjust="spacingAndGlyphs">17:22</text>
<text x="1274.500" y="761.300" font-family="Liberation Sans, sans-serif" font-size="12" fill="#fff" text-anchor="middle" textLength="52.500" lengthAdjust="spacingAndGlyphs">13.11.2020</text>
<path d="M1319.500 740.500 H1334.500 V751.500 H1324 L1321 754.500 V751.500 H1319.500 Z" fill="#fff"/>
<path d="M1322 743.500 H1332 M1322 746 H1332 M1322 748.500 H1329" stroke="#19292e" stroke-width="1"/>
<circle cx="1334.800" cy="755.800" r="7.600" fill="#2b3438" stroke="#8d9497" stroke-width="1"/>
<text x="1334.800" y="759.800" font-family="Liberation Sans, sans-serif" font-size="11" font-weight="bold" fill="#fff" text-anchor="middle">1</text>
<path d="M1355.500 728 V768" stroke="#7d878a" stroke-width="1"/>
</svg>
<!--/TASKBAR-->
</body>
</html>
